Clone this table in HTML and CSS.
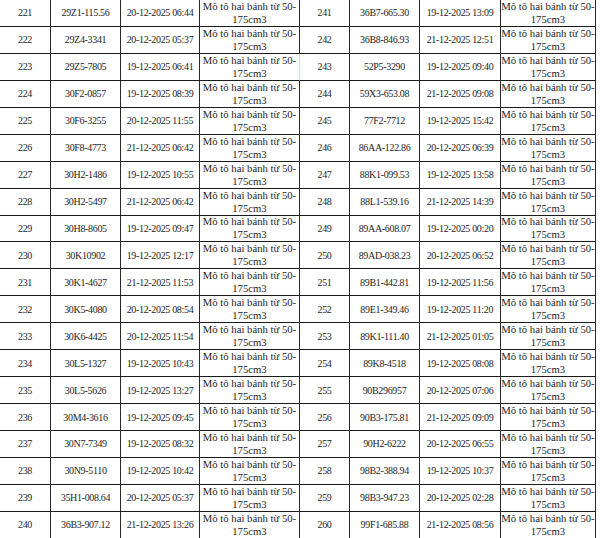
FILE: index.html
```html
<!DOCTYPE html>
<html lang="vi">
<head>
<meta charset="utf-8">
<title>Danh sách phương tiện</title>
<link rel="stylesheet" href="styles.css">
</head>
<body>
<div class="sheet">
  <div class="row"><div class="c n">221</div><div class="c p">29Z1-115.56</div><div class="c d">20-12-2025 06:44</div><div class="c t">Mô tô hai bánh từ 50-<br>175cm3</div><div class="c n">241</div><div class="c p">36B7-665.30</div><div class="c d">19-12-2025 13:09</div><div class="c t">Mô tô hai bánh từ 50-<br>175cm3</div></div>
  <div class="row"><div class="c n">222</div><div class="c p">29Z4-3341</div><div class="c d">20-12-2025 05:37</div><div class="c t">Mô tô hai bánh từ 50-<br>175cm3</div><div class="c n">242</div><div class="c p">36B8-846.93</div><div class="c d">21-12-2025 12:51</div><div class="c t">Mô tô hai bánh từ 50-<br>175cm3</div></div>
  <div class="row"><div class="c n">223</div><div class="c p">29Z5-7805</div><div class="c d">19-12-2025 06:41</div><div class="c t mark">Mô tô hai bánh từ 50-<br>175cm3</div><div class="c n">243</div><div class="c p">52P5-3290</div><div class="c d">19-12-2025 09:40</div><div class="c t">Mô tô hai bánh từ 50-<br>175cm3</div></div>
  <div class="row"><div class="c n">224</div><div class="c p">30F2-0857</div><div class="c d">19-12-2025 08:39</div><div class="c t">Mô tô hai bánh từ 50-<br>175cm3</div><div class="c n">244</div><div class="c p">59X3-653.08</div><div class="c d">21-12-2025 09:08</div><div class="c t">Mô tô hai bánh từ 50-<br>175cm3</div></div>
  <div class="row"><div class="c n">225</div><div class="c p">30F6-3255</div><div class="c d">20-12-2025 11:55</div><div class="c t">Mô tô hai bánh từ 50-<br>175cm3</div><div class="c n">245</div><div class="c p">77F2-7712</div><div class="c d">19-12-2025 15:42</div><div class="c t">Mô tô hai bánh từ 50-<br>175cm3</div></div>
  <div class="row"><div class="c n">226</div><div class="c p">30F8-4773</div><div class="c d">21-12-2025 06:42</div><div class="c t">Mô tô hai bánh từ 50-<br>175cm3</div><div class="c n">246</div><div class="c p">86AA-122.86</div><div class="c d">20-12-2025 06:39</div><div class="c t">Mô tô hai bánh từ 50-<br>175cm3</div></div>
  <div class="row"><div class="c n">227</div><div class="c p">30H2-1486</div><div class="c d">19-12-2025 10:55</div><div class="c t">Mô tô hai bánh từ 50-<br>175cm3</div><div class="c n">247</div><div class="c p">88K1-099.53</div><div class="c d">19-12-2025 13:58</div><div class="c t">Mô tô hai bánh từ 50-<br>175cm3</div></div>
  <div class="row"><div class="c n">228</div><div class="c p">30H2-5497</div><div class="c d">21-12-2025 06:42</div><div class="c t">Mô tô hai bánh từ 50-<br>175cm3</div><div class="c n">248</div><div class="c p">88L1-539.16</div><div class="c d">21-12-2025 14:39</div><div class="c t">Mô tô hai bánh từ 50-<br>175cm3</div></div>
  <div class="row"><div class="c n">229</div><div class="c p">30H8-8605</div><div class="c d">19-12-2025 09:47</div><div class="c t">Mô tô hai bánh từ 50-<br>175cm3</div><div class="c n">249</div><div class="c p">89AA-608.07</div><div class="c d">19-12-2025 00:20</div><div class="c t">Mô tô hai bánh từ 50-<br>175cm3</div></div>
  <div class="row"><div class="c n">230</div><div class="c p">30K10902</div><div class="c d">19-12-2025 12:17</div><div class="c t">Mô tô hai bánh từ 50-<br>175cm3</div><div class="c n">250</div><div class="c p">89AD-038.23</div><div class="c d">20-12-2025 06:52</div><div class="c t">Mô tô hai bánh từ 50-<br>175cm3</div></div>
  <div class="row"><div class="c n">231</div><div class="c p">30K1-4627</div><div class="c d">21-12-2025 11:53</div><div class="c t">Mô tô hai bánh từ 50-<br>175cm3</div><div class="c n">251</div><div class="c p">89B1-442.81</div><div class="c d">19-12-2025 11:56</div><div class="c t">Mô tô hai bánh từ 50-<br>175cm3</div></div>
  <div class="row"><div class="c n">232</div><div class="c p">30K5-4080</div><div class="c d">20-12-2025 08:54</div><div class="c t">Mô tô hai bánh từ 50-<br>175cm3</div><div class="c n">252</div><div class="c p">89E1-349.46</div><div class="c d">19-12-2025 11:20</div><div class="c t">Mô tô hai bánh từ 50-<br>175cm3</div></div>
  <div class="row"><div class="c n">233</div><div class="c p">30K6-4425</div><div class="c d">20-12-2025 11:54</div><div class="c t">Mô tô hai bánh từ 50-<br>175cm3</div><div class="c n">253</div><div class="c p">89K1-111.40</div><div class="c d">21-12-2025 01:05</div><div class="c t">Mô tô hai bánh từ 50-<br>175cm3</div></div>
  <div class="row"><div class="c n">234</div><div class="c p">30L5-1327</div><div class="c d">19-12-2025 10:43</div><div class="c t">Mô tô hai bánh từ 50-<br>175cm3</div><div class="c n">254</div><div class="c p">89K8-4518</div><div class="c d">19-12-2025 08:08</div><div class="c t">Mô tô hai bánh từ 50-<br>175cm3</div></div>
  <div class="row"><div class="c n">235</div><div class="c p">30L5-5626</div><div class="c d">19-12-2025 13:27</div><div class="c t">Mô tô hai bánh từ 50-<br>175cm3</div><div class="c n">255</div><div class="c p">90B296957</div><div class="c d">20-12-2025 07:06</div><div class="c t">Mô tô hai bánh từ 50-<br>175cm3</div></div>
  <div class="row"><div class="c n">236</div><div class="c p">30M4-3616</div><div class="c d">19-12-2025 09:45</div><div class="c t">Mô tô hai bánh từ 50-<br>175cm3</div><div class="c n">256</div><div class="c p">90B3-175.81</div><div class="c d">21-12-2025 09:09</div><div class="c t">Mô tô hai bánh từ 50-<br>175cm3</div></div>
  <div class="row"><div class="c n">237</div><div class="c p">30N7-7349</div><div class="c d">19-12-2025 08:32</div><div class="c t">Mô tô hai bánh từ 50-<br>175cm3</div><div class="c n">257</div><div class="c p">90H2-6222</div><div class="c d">20-12-2025 06:55</div><div class="c t">Mô tô hai bánh từ 50-<br>175cm3</div></div>
  <div class="row"><div class="c n">238</div><div class="c p">30N9-5110</div><div class="c d">19-12-2025 10:42</div><div class="c t">Mô tô hai bánh từ 50-<br>175cm3</div><div class="c n">258</div><div class="c p">98B2-388.94</div><div class="c d">19-12-2025 10:37</div><div class="c t">Mô tô hai bánh từ 50-<br>175cm3</div></div>
  <div class="row"><div class="c n">239</div><div class="c p">35H1-008.64</div><div class="c d">20-12-2025 05:37</div><div class="c t">Mô tô hai bánh từ 50-<br>175cm3</div><div class="c n">259</div><div class="c p">98B3-947.23</div><div class="c d">20-12-2025 02:28</div><div class="c t">Mô tô hai bánh từ 50-<br>175cm3</div></div>
  <div class="row"><div class="c n">240</div><div class="c p">36B3-907.12</div><div class="c d">21-12-2025 13:26</div><div class="c t">Mô tô hai bánh từ 50-<br>175cm3</div><div class="c n">260</div><div class="c p">99F1-685.88</div><div class="c d">21-12-2025 08:56</div><div class="c t">Mô tô hai bánh từ 50-<br>175cm3</div></div>
</div>
</body>
</html>
```
FILE: styles.css
```css
html, body {
  margin: 0;
  padding: 0;
  background: #ffffff;
}

body {
  font-family: "Liberation Serif", "Times New Roman", serif;
  color: #1e1e1e;
  overflow: hidden;
}

.sheet {
  width: 596px;
  display: flex;
  flex-direction: column;
}

.row {
  display: grid;
  grid-template-columns: 51px 70px 79px 100px 50px 70px 81px 95px;
  height: 26.94px;
  flex: none;
}

.c {
  border-right: 1px solid #2a2a2a;
  border-bottom: 1px solid #1a1a1a;
  display: flex;
  align-items: center;
  justify-content: center;
  text-align: center;
  font-size: 10px;
  line-height: 13px;
  white-space: nowrap;
  overflow: hidden;
}

.n,
.p,
.d {
  letter-spacing: -0.33px;
}

.t {
  font-size: 10.7px;
  line-height: 13px;
}

.mark {
  border-right-color: #f2dc8c;
}
```
